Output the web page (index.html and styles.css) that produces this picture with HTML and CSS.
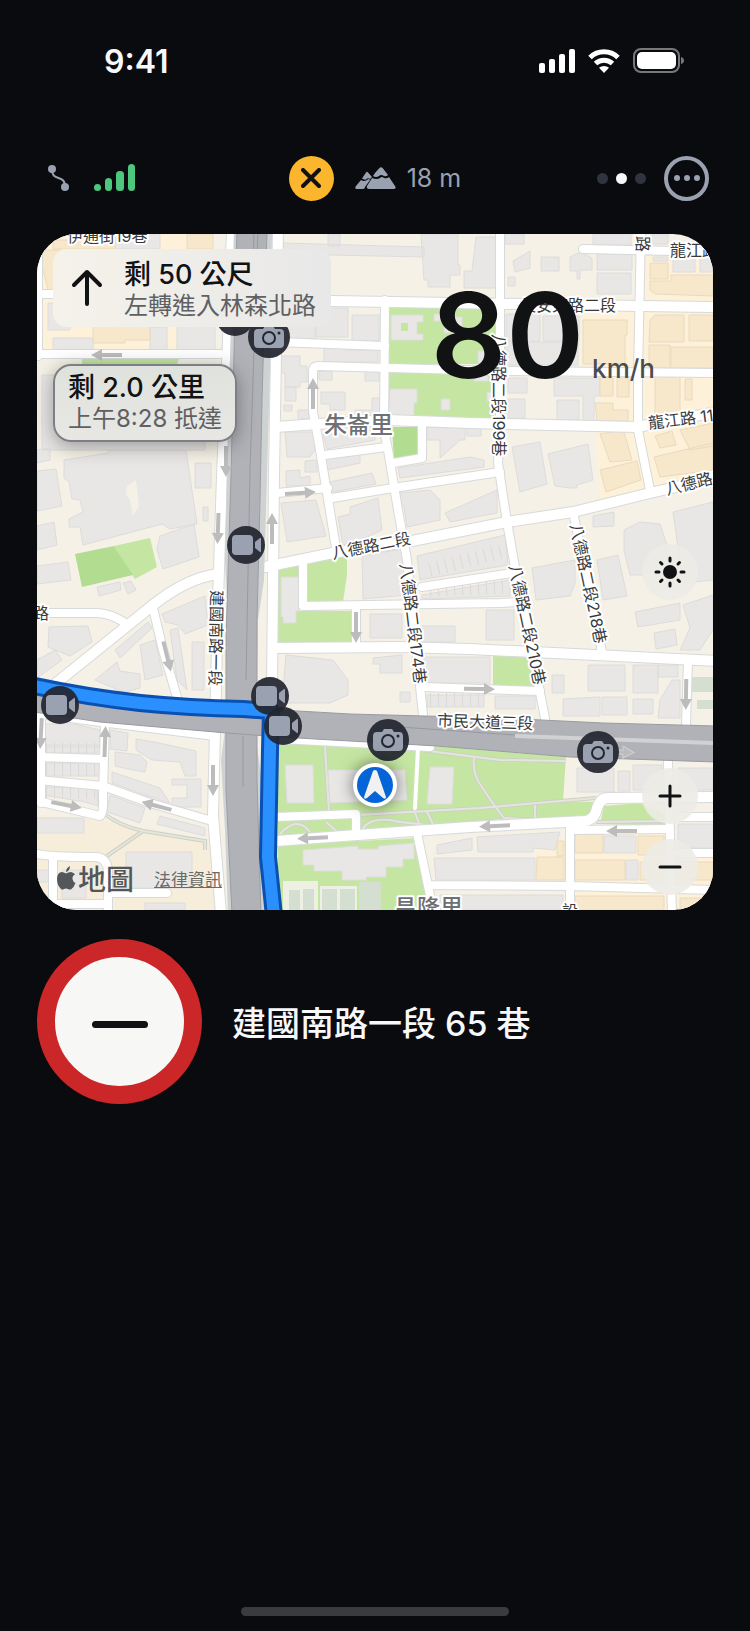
FILE: index.html
```html
<!DOCTYPE html>
<html lang="zh-Hant">
<head>
    <meta charset="UTF-8">
    <meta name="viewport" content="width=device-width, initial-scale=1.0">
    <title>導航</title>
    <link rel="stylesheet" href="styles.css">
</head>
<body>
    <div class="status-bar">
        <span class="clock">9:41</span>
        <div class="status-icons">
            <svg width="36" height="24" viewBox="0 0 36 24" fill="#fff">
                <rect x="0" y="14" width="6" height="10" rx="2"/>
                <rect x="10" y="10" width="6" height="14" rx="2"/>
                <rect x="20" y="5" width="6" height="19" rx="2"/>
                <rect x="30" y="0" width="6" height="24" rx="2"/>
            </svg>
            <svg width="32" height="24" viewBox="0 0 32 24" fill="none" stroke="#fff" stroke-width="5">
                <path d="M2 8.500a20 20 0 0 1 28 0"/>
                <path d="M7.500 14.500a12.500 12.500 0 0 1 17 0"/>
                <path d="M16 24l-5-5.200a7.500 7.500 0 0 1 10 0z" fill="#fff" stroke="none"/>
            </svg>
            <svg width="52" height="26" viewBox="0 0 52 26">
                <rect x="1" y="1" width="45" height="23" rx="7" fill="none" stroke="#77787a" stroke-width="2"/>
                <rect x="4" y="4" width="39" height="17" rx="5" fill="#fff"/>
                <path d="M48 9c4 1 4 6 0 7z" fill="#77787a"/>
            </svg>
        </div>
    </div>

    <div class="toolbar">
        <div class="tools-left">
            <svg width="24" height="28" viewBox="0 0 24 28">
                <path d="M5 5c0 14 13 4 13 18" fill="none" stroke="#9aa2b1" stroke-width="2"/>
                <circle cx="5" cy="5" r="4" fill="#9aa2b1"/>
                <circle cx="18" cy="23" r="4" fill="#9aa2b1"/>
            </svg>
            <svg width="42" height="28" viewBox="0 0 42 28" fill="#4dc67e">
                <rect x="0" y="20" width="7" height="7" rx="3.500"/>
                <rect x="11" y="14" width="7" height="13" rx="3.500"/>
                <rect x="22" y="7" width="8" height="20" rx="3.500"/>
                <rect x="34" y="0" width="7" height="27" rx="3.500"/>
            </svg>
        </div>
        <div class="tools-center">
            <button class="round-btn close-btn" aria-label="結束">
                <svg width="20" height="20" viewBox="0 0 20 20" stroke="#111214" stroke-width="4" stroke-linecap="round"><path d="M2 2l16 16M18 2L2 18"/></svg>
            </button>
            <div class="altitude">
                <svg width="41" height="22" viewBox="0 0 41 22" fill="#9aa2b1">
                    <path d="M8 6L11 1.500Q12 0 13 1.500L17 6L15 8Q13 6.500 11 8.500Q9 9 7 7.500Z" transform="translate(0 4)"/>
                    <path d="M6 13Q9 15 12 13Q14 11 15 13L10 20Q10 22 8 22H2Q-1 22 1 19Z"/>
                    <path d="M20 6L24 1.500Q26-1 28 1.500L33 8Q31 10 29 9Q26 7 24 9Q21 11 18 9Z"/>
                    <path d="M17 11Q22 13 25 11Q27 9 29 11Q32 12 34 10L40 19Q42 22 38 22H14Q11 22 12 19Z"/>
                </svg>
                <span>18 m</span>
            </div>
        </div>
        <div class="tools-right">
            <div class="page-dots"><i></i><i class="active"></i><i></i></div>
            <button class="round-btn more-btn" aria-label="更多"><i></i><i></i><i></i></button>
        </div>
    </div>

    <main>
        <div class="map-card">
            <svg class="map" viewBox="37 234 676 676" preserveAspectRatio="xMidYMid slice">
                <defs>
                    <g id="wide">
                        <path d="M232 230L228 340L222 475L218 600L215 730L213 815L221 914"/>
                        <path d="M278 230L274 475L272 690L271 745"/>
                        <path d="M265 567L333 553L407 542L507 522L573 512L650 493L716 478"/>
                        <path d="M277 648L400 647L470 649L716 661"/>
                        <path d="M37 698L60 680L127 626L153 605Q187 578 218 574"/>
                        <path d="M276 841L357 835L470 827L585 821Q593 820 596 812Q599 798 608 798L716 797"/>
                        <path d="M332 301L640 306L716 307"/>
                        <path d="M276 427L317 424L387 420L470 423L637 427L716 412"/>
                    </g>
                    <g id="narrow">
                        <path d="M385 300L384 430L388 450L398 510L407 560L423 715"/>
                        <path d="M716 373L500 371L318 366Q313 366 313 372V412L318 438L336 548"/>
                        <path d="M276 342L385 346"/>
                        <path d="M325 455L386 447M393 463L422 458V425"/>
                        <path d="M277 493L328 488M332 498L393 488L500 472"/>
                        <path d="M303 563V606L500 603L520 602"/>
                        <path d="M422 587L512 573"/>
                        <path d="M356 606V648"/>
                        <path d="M423 687L540 691"/>
                        <path d="M500 230V425L498 463L507 522L515 567L545 718"/>
                        <path d="M641 230L638 375V430L650 490"/>
                        <path d="M573 512L602 652"/>
                        <path d="M688 661L686 725"/>
                        <path d="M583 249L716 252"/>
                        <path d="M44 294H220M38 354H220M38 234V356"/>
                        <path d="M34 613H97Q110 613 127 624"/>
                        <path d="M153 608L163 650L177 697"/>
                        <path d="M38 757L104 759M38 780L103 786L150 803L212 821"/>
                        <path d="M38 801L100 816Q104 814 103 795L105 723"/>
                        <path d="M41 718V803"/>
                        <path d="M34 853Q45 857 97 857Q108 859 108 872V914M108 893H167M53 858V914M53 904H108"/>
                        <path d="M276 817L356 814V834"/>
                        <path d="M573 830L670 829M417 833L432 905M570 823V914M430 885L570 886L716 890"/>
                        <path d="M668 762L672 914M678 817H716M678 853H716"/>
                        <path d="M34 713L100 722L215 736"/>
                        <path d="M280 739L430 747"/>
                    </g>
                    <path id="route" d="M30 685Q80 696 140 703Q190 708 243 709L271 711L270 750L268 857L274 916" fill="none" stroke-linejoin="round"/>
                    <path id="arrow" d="M-2 15V-5H-6L0-16L6-5H2V15Z"/>
                    <g id="video">
                        <circle r="19" fill="#22262f" fill-opacity=".93"/>
                        <rect x="-14" y="-10" width="21" height="20" rx="4" fill="#9aa2b1"/>
                        <path d="M9-3L14-7Q15-8 15-5V5Q15 8 14 7L9 3Z" fill="#9aa2b1"/>
                    </g>
                    <g id="photo">
                        <circle r="21" fill="#22262f" fill-opacity=".93"/>
                        <path d="M-11-8H-6L-4-11H4L6-8H11Q15-8 15-4V7Q15 11 11 11H-11Q-15 11-15 7V-4Q-15-8-11-8Z" fill="#9aa2b1"/>
                        <circle cy="1" r="6" fill="none" stroke="#22262f" stroke-width="2"/>
                        <circle cx="10" cy="-4" r="1.500" fill="#22262f"/>
                    </g>
                </defs>

                <rect x="37" y="234" width="676" height="676" fill="#f5f1e6"/>

                <!-- land use -->
                <g fill="#fdf1d9">
                    <path d="M42 234H214V350H42Z"/>
                    <path d="M645 253H713V412L638 425V310H582V305H645ZM582 312H634V422H602V396H582Z"/>
                    <path d="M596 431H640L713 418V478L600 503Z"/>
                    <path d="M575 834H668V910H575ZM678 858H713V910H678ZM535 840H565V880H535Z"/>
                    <path d="M37 815L100 820L210 840L217 910H37Z" fill="#f6edda"/>
                </g>
                <g fill="#c5e6a2">
                    <path d="M389 308H495V364H389ZM388 373H494V419H388Z"/>
                    <path d="M114 546L150 538L157 567L135 579Z"/>
                    <path d="M277 568L298 563V611H351V644H277ZM307 562L347 555V575L343 602H307Z"/>
                    <path d="M493 655H531L536 687H493Z"/>
                    <path d="M278 738L437 746L566 757L563 801L595 802L590 820L278 841ZM278 845L417 838L432 896L425 910H278Z"/>
                    <path d="M604 806L640 803L668 815V826L600 824Z"/>
                    <path d="M82 359H179L176 366H82Z"/>
                </g>
                <path d="M75 554L114 546L133 575L82 587ZM392 427H418V459L394 461Z" fill="#b2dd90"/>

                <!-- park paths -->
                <g fill="none" stroke="#cdd1c6" stroke-width="4">
                    <path d="M325 747L329 812M357 815L480 808L596 798M421 750L500 760L565 761M474 757Q472 775 482 787Q490 800 504 818L540 820M535 805V818M280 834Q297 815 310 832M326 822L340 834M362 830Q370 815 400 822L436 826L500 820M427 812L434 826M414 810L420 826"/>
                    <path d="M103 813Q120 826 143 831L205 841V850M143 831L107 856M596 822L668 821"/>
                </g>
                <g fill="none" stroke="#e4e6dc" stroke-width="2">
                    <path d="M325 747L329 812M357 815L480 808L596 798M421 750L500 760L565 761M474 757Q472 775 482 787Q490 800 504 818L540 820M535 805V818M280 834Q297 815 310 832M326 822L340 834M362 830Q370 815 400 822L436 826L500 820M427 812L434 826M414 810L420 826"/>
                    <path d="M103 813Q120 826 143 831L205 841V850M143 831L107 856M596 822L668 821"/>
                </g>

                <!-- buildings -->
                <g class="building">
                    <path d="M283 243L424 247V257L283 254ZM328 234H340V246H328ZM421 234H458V265H460V275H450V287H428V280H424ZM476 237H497V288H464V271H472Z"/>
                    <path d="M316 308H348V337H316ZM352 315H379V341H352ZM283 325H315V339H283ZM324 347H345V350H378V362H324ZM281 356H300V366H307V382H300V387H285V373H281ZM285 387H296V401H285ZM284 405H292V411H284ZM319 371H332V380H319ZM321 392H345V410H330V404H321ZM365 371H379V381H365ZM372 398H380V415H355V410H372ZM285 432H313L317 447L310 457H287ZM323 434L375 430V440L327 449ZM298 410H309V419H298Z"/>
                    <path d="M391 315H423V322H417V334H423V340H391ZM390 389H417V403H414V416H388ZM441 399H450V410H441ZM434 314H442V321H434ZM444 317H462V333H444ZM478 351H492V363H478ZM474 372H488V381H474ZM487 392H493V401H487ZM427 427H465V440H460L440 458V440H427ZM467 428H481V436H467Z"/>
                    <path d="M505 234H524V244H505ZM513 261L530 251V268L515 272ZM541 257H559V271H541ZM570 257L580 252L592 258V270H580V279H577V271H570ZM508 277H515V286H508ZM593 234H631V245H593ZM597 254H632V270H597ZM597 273H631V294H597ZM652 234H668V244H652ZM673 257H695V272H673ZM700 257H713V272H700ZM653 257H668V261H653ZM506 314H540V341H506ZM543 316H579V341H543ZM506 342H578V365H506ZM508 378H527V393H508ZM554 378H600V396H594V421H583V396H554ZM508 399H525V418H508ZM557 400H579V420H557Z"/>
                    <path d="M512 447L540 442L547 484L520 492ZM548 454L588 444L593 480L577 485V488H570L555 486ZM593 516L614 512V526L593 527ZM624 530L640 522L660 524L668 548V560L645 575L630 575L624 550ZM673 512L713 502V580L683 583ZM532 568L575 560V583L570 596L536 600ZM597 560L618 555L627 596L603 600ZM635 612L680 603V620L638 627ZM683 605L713 595V630L700 650H680L690 628ZM654 633L675 629L677 645L656 649ZM588 665H625V691H588ZM633 665H658V693H633ZM658 665H678V677H658Z"/>
                    <path d="M281 503L316 500L326 536L287 542ZM286 471L300 470V478L310 476V486H286ZM305 461L317 460V472H305ZM326 459L360 454V463L327 470ZM330 482L372 473L376 484L333 492ZM338 517L350 514V507L378 498L382 530L360 540L343 545ZM398 468L470 457L484 460V467L400 478ZM400 493L430 490L440 500V520L407 527L404 506H400ZM445 513L497 490V513L450 522ZM362 556L402 549L407 595L363 599ZM417 556L505 535L508 565L420 580ZM422 595L510 580V596L422 599ZM281 577H299V611H296V623H283V617H281ZM370 614H402V638H370ZM420 626H455V642H420ZM486 610H514V640H486Z"/>
                    <path d="M286 655L333 660L348 680V695L330 703H282ZM373 658L402 655V673H380V664H373ZM424 657H490V683H424ZM427 695H484V707H427ZM400 692H410V702H400ZM563 699L600 697V716H563ZM602 697H627V715H602ZM633 699H653V714H633ZM660 700L672 680H680V718H658ZM495 696H535V709H495ZM552 675H564V693H552Z"/>
                    <path d="M577 768H614V792H577ZM618 771H630V791H618ZM633 765H662V790H633ZM678 768H713V790H678ZM285 765H313L314 803H287ZM328 770H405L407 800L330 803ZM430 767H454L452 804H427ZM303 850L358 846V849H378V846L414 843V859H403V867H386V877H366V880H342V871H314V865H303Z"/>
                    <path d="M437 845L472 838V850L437 854ZM477 837L560 832L555 850L533 848V852H478ZM434 858H535V880H436ZM440 895H563V910H440ZM604 836H636V853H604ZM626 860H638V880H626ZM678 824H713V848H678Z"/>
                    <path d="M37 450L50 448V460L37 463ZM37 471L56 469L62 506L37 511ZM64 460L108 453V450H186L197 524L170 529L162 524L83 545L80 527H69V519L83 512L80 500L72 499L69 482L64 478ZM160 536L194 524L199 557L163 569L157 550ZM37 526L54 522L57 545L37 550ZM37 566L68 562L71 580L37 584ZM97 587L120 582L121 590L99 596ZM123 583L131 581L136 590L128 594ZM195 463H211V488H195ZM203 507H208V521H203ZM42 375H205V450H42Z"/>
                    <path d="M49 627L88 626L92 642L70 656L48 647ZM37 660L55 650L62 660L37 678ZM162 614L205 596L208 625L185 634L178 625L165 622ZM192 642H204V690H192ZM140 645L155 640L163 675L145 680ZM115 650L148 622L152 628L120 658ZM170 630L178 628L187 690L177 680ZM95 680L117 662L120 671L140 674V688L125 692L118 690Z"/>
                    <path d="M45 724H74L100 730V747H45ZM110 730L128 733L127 751L110 749ZM136 739L154 742L196 751V776H185L180 762L152 760L136 750ZM43 745H98V753H43ZM43 763H100V776H43ZM43 787H97L98 806L85 802L43 795ZM115 752L140 755L147 762L145 772L133 770L115 766ZM112 772L160 788L170 803L148 796L112 783ZM110 795L145 808L140 823L107 812ZM172 779H201V807H172V798H187V785H172ZM160 816L205 828V836L157 824ZM37 818H84V833H37ZM126 852H192V888H126ZM37 870H50V882H37ZM62 870H86V898H62ZM145 903H185V910H145Z"/>
                    <path d="M53 338H93V350H53ZM150 327H167V351H150ZM177 326H215V350H177ZM48 303H70V330H48ZM115 234H160V249H115Z"/>
                </g>
                <g class="shop">
                    <path d="M93 326H150V340H125V343H93ZM53 240H115V249H53ZM187 234H213V249H187ZM38 250H60V290H48Z"/>
                    <path d="M650 263H668V279H650ZM671 275H713V296L655 294L650 290V281H671ZM650 320L655 315H684V342H649ZM689 315H713V341H689ZM649 345H670V368H649ZM671 347H713V368H671ZM583 320H627V335H625V364H583ZM600 378H613V396H600ZM617 378H629V397H617ZM595 403H613V410H628V421H597ZM655 376H680V414H655ZM685 379H692V400H685Z"/>
                    <path d="M600 434L623 430L627 442L632 460L610 462ZM655 436L672 431L676 445L660 448ZM680 430L713 423V446L690 450ZM654 457L713 443V470L660 477ZM600 470L637 461L641 480L606 492Z"/>
                    <path d="M575 834H603V853H575ZM575 860H625V880H575ZM638 836H664V855H638ZM640 862H664V880H640ZM575 896H664V910H575ZM537 857H564V880H536ZM557 841H564V856H557ZM680 862H713V880H680ZM680 898H713V910H680Z"/>
                </g>
                <path d="M401 323H408V331H401Z" fill="#c5e6a2"/>
                <path d="M127 486L136 480L139 506L133 516L130 500L126 495Z" fill="#f5f1e6"/>
                <g fill="#d4dfd2">
                    <path d="M692 677H713V692H692ZM697 700H713V709H697Z"/>
                    <path d="M283 881H318V910H283ZM320 886H357V910H320Z" fill="#edf0e3"/>
                    <path d="M289 890H300V910H289ZM303 889H314V910H303ZM322 889H337V910H322ZM340 889H355V910H340ZM359 882H381V910H359Z"/>
                </g>
                <g stroke="#dad9d7" stroke-dasharray="1 7">
                    <path d="M46 749H98M46 769H100M46 792H98" stroke-width="13"/>
                    <path d="M430 570L508 550M430 590L508 586M430 700H484" stroke-width="14"/>
                </g>

                <!-- streets -->
                <g fill="none" stroke="#d7dada" stroke-linejoin="round" stroke-linecap="round">
                    <use href="#narrow" stroke-width="10"/>
                    <use href="#wide" stroke-width="12"/>
                </g>
                <g fill="none" stroke="#fff" stroke-linejoin="round" stroke-linecap="round">
                    <use href="#narrow" stroke-width="8"/>
                    <use href="#wide" stroke-width="10"/>
                    <path d="M418 748L415 808" stroke-width="4"/>
                </g>

                <!-- expressways -->
                <path d="M234 230L228 420L225 560L229 640V700L221 760L225 830L228 914H266L262 780L256 740L258 620L264 580L270 370L272 230Z" fill="#ced2d2"/>
                <path d="M237 230H267L262 400L260 500L257 620V780L261 914H232L226 790V640L231 475Z" fill="#b1b2b8" stroke="#9c9da3"/>
                <path d="M34 690L140 705L280 710L350 714L500 718L603 723L716 726V762L570 757L437 746L280 737L227 733L100 722L34 712Z" fill="#b1b2b8" stroke="#9a9ba1"/>
                <path d="M258 230L250 470L246 680M243 736V787M254 230L252 350" fill="none" stroke="#98999f"/>
                <path d="M515 736L716 743" stroke="#cfd1d3" stroke-width="4"/>
                <path d="M400 727L515 735" stroke="#98999f"/>

                <g fill="#bcbcbc">
                    <use href="#arrow" transform="translate(313 394)"/>
                    <use href="#arrow" transform="translate(300 493) rotate(86)"/>
                    <use href="#arrow" transform="translate(272 529)"/>
                    <use href="#arrow" transform="translate(107 355) rotate(-90)"/>
                    <use href="#arrow" transform="translate(226 461) rotate(180)"/>
                    <use href="#arrow" transform="translate(218 528) rotate(182)"/>
                    <use href="#arrow" transform="translate(167 656) rotate(166)"/>
                    <use href="#arrow" transform="translate(356 627) rotate(180)"/>
                    <use href="#arrow" transform="translate(479 689) rotate(91)"/>
                    <use href="#arrow" transform="translate(686 694) rotate(181)"/>
                    <use href="#arrow" transform="translate(41 733) rotate(183)"/>
                    <use href="#arrow" transform="translate(105 742) rotate(2)"/>
                    <use href="#arrow" transform="translate(66 805) rotate(101)"/>
                    <use href="#arrow" transform="translate(157 806) rotate(-75)"/>
                    <use href="#arrow" transform="translate(213 780) rotate(180)"/>
                    <use href="#arrow" transform="translate(313 838) rotate(-93)"/>
                    <use href="#arrow" transform="translate(495 826) rotate(-93)"/>
                    <use href="#arrow" transform="translate(622 831) rotate(-90)"/>
                    <use href="#arrow" transform="translate(618 752) rotate(92)" stroke="#ced0d2"/>
                </g>

                <use href="#route" stroke="#0a50b0" stroke-width="18"/>
                <use href="#route" stroke="#2b90ff" stroke-width="12"/>

                <g class="street-name">
                    <text x="67" y="242">伊通街19巷</text>
                    <text x="520" y="311">長安東路二段</text>
                    <text x="670" y="256">龍江路</text>
                    <text x="33" y="619">路</text>
                    <text transform="translate(637 236) rotate(90)">路</text>
                    <text transform="translate(649 429) rotate(-7)">龍江路 11</text>
                    <text transform="translate(667 495) rotate(-14)">八德路二段</text>
                    <text transform="translate(333 559) rotate(-11)">八德路二段</text>
                    <text transform="translate(437 726) rotate(2)">市民大道三段</text>
                    <text transform="translate(211 590) rotate(91)">建國南路一段</text>
                    <text transform="translate(493 334) rotate(90)">八德路二段199巷</text>
                    <text transform="translate(400 564) rotate(83)">八德路二段174巷</text>
                    <text transform="translate(509 566) rotate(78)">八德路二段210巷</text>
                    <text transform="translate(570 525) rotate(78)">八德路二段218巷</text>
                    <text x="562" y="917">設</text>
                </g>
                <g class="area-name">
                    <text x="324" y="433">朱崙里</text>
                    <text x="394" y="916">昌隆里</text>
                </g>

                <use href="#video" x="235" y="317"/>
                <use href="#photo" x="269" y="337"/>
                <use href="#video" x="246" y="545"/>
                <use href="#video" x="60" y="705"/>
                <use href="#video" x="270" y="696"/>
                <use href="#video" x="283" y="726"/>
                <use href="#photo" x="388" y="740"/>
                <use href="#photo" x="598" y="752"/>
                <g class="me">
                    <circle cx="375" cy="785" r="22" fill="#fff"/>
                    <circle cx="375" cy="785" r="18" fill="#0564d6"/>
                    <path d="M373 771Q375 769 377 771L386 797Q386 800 383 798L375 791L367 798Q364 800 364 797Z" fill="#f1f1f1"/>
                </g>
            </svg>

            <div class="guidance">
                <svg width="32" height="38" viewBox="0 0 32 38" fill="none" stroke="#111214" stroke-width="4" stroke-linecap="round" stroke-linejoin="round"><path d="M16 35V3M3 16L16 3L29 16"/></svg>
                <div>
                    <p class="distance">剩 50 公尺</p>
                    <p class="detail">左轉進入林森北路</p>
                </div>
            </div>
            <div class="arrival">
                <p class="distance">剩 2.0 公里</p>
                <p class="detail">上午8:28 抵達</p>
            </div>

            <div class="speed"><strong>80</strong><span>km/h</span></div>

            <button class="map-btn sun-btn" aria-label="亮度">
                <svg width="32" height="32" viewBox="-16 -16 32 32" stroke="#111214" stroke-width="3" stroke-linecap="round">
                    <circle r="7" fill="#111214" stroke="none"/>
                    <path d="M0-11V-14M0 11V14M-11 0H-14M11 0H14M8-8L9.500-9.500M-8-8L-9.500-9.500M8 8L9.500 9.500M-8 8L-9.500 9.500"/>
                </svg>
            </button>
            <div class="zoom-btns">
                <button class="map-btn" aria-label="放大">
                    <svg width="24" height="24" viewBox="0 0 24 24" stroke="#111214" stroke-width="3" stroke-linecap="round"><path d="M2 12H22M12 2V22"/></svg>
                </button>
                <button class="map-btn" aria-label="縮小">
                    <svg width="24" height="24" viewBox="0 0 24 24" stroke="#111214" stroke-width="3" stroke-linecap="round"><path d="M2 12H22"/></svg>
                </button>
            </div>

            <div class="attribution">
                <span class="brand">
                    <svg width="19" height="24" viewBox="0 0 19 24" fill="#55565a">
                        <path d="M13 0Q13 5 9 6Q9 2 13 0ZM9 7.500Q11 6 14 6Q17 6.500 18 8.500Q15 10 15.500 13Q16 16 18.500 17Q17 21 14.500 23Q13 24 11 23Q9 22 7 23Q5 24 4 23Q0 19 0 13Q0 7 4.500 6Q7 6 9 7.500Z"/>
                    </svg>
                    地圖
                </span>
                <a href="#">法律資訊</a>
            </div>
        </div>

        <div class="road-info">
            <div class="limit-sign"><i></i></div>
            <p>建國南路一段 65 巷</p>
        </div>
    </main>

    <div class="home-bar"></div>
</body>
</html>
```

FILE: styles.css
```css
* {
    box-sizing: border-box;
}
body {
    margin: 0;
    min-height: 100vh;
    display: flex;
    flex-direction: column;
    background: #090b0f;
    color: #f7f8fa;
    font-family: Inter, "Noto Sans CJK TC", sans-serif;
}
p {
    margin: 0;
}
button {
    padding: 0;
    border: none;
    cursor: pointer;
}
svg {
    display: block;
}

/* top rows */
.status-bar {
    display: flex;
    justify-content: space-between;
    align-items: center;
    height: 60px;
    margin-top: 31px;
    padding: 0 65px 0 104px;
}
.clock {
    font-size: 32px;
    font-weight: 600;
}
.status-icons {
    display: flex;
    align-items: center;
    gap: 13px;
}
.toolbar {
    display: grid;
    grid-template-columns: 1fr auto 1fr;
    align-items: center;
    height: 46px;
    margin: 64px 41px 33px;
}
.tools-left,
.tools-center,
.tools-right {
    display: flex;
    align-items: center;
}
.tools-left {
    gap: 23px;
    padding-left: 6px;
}
.tools-center {
    gap: 21px;
}
.tools-right {
    justify-content: flex-end;
    gap: 18px;
}
.round-btn {
    display: flex;
    align-items: center;
    justify-content: center;
    width: 45px;
    height: 45px;
    border-radius: 50%;
}
.close-btn {
    background: #fbb62e;
}
.more-btn {
    gap: 4px;
    background: none;
    border: 4px solid #9aa2b1;
}
.more-btn i {
    width: 6px;
    height: 6px;
    border-radius: 50%;
    background: #9aa2b1;
}
.altitude {
    display: flex;
    align-items: center;
    gap: 11px;
    color: #9aa2b1;
    font-size: 25px;
}
.page-dots {
    display: flex;
    gap: 8px;
}
.page-dots i {
    width: 11px;
    height: 11px;
    border-radius: 50%;
    background: #30343e;
}
.page-dots .active {
    background: #f7f8fa;
}

/* map */
main {
    padding: 0 37px;
}
.map-card {
    position: relative;
    aspect-ratio: 1;
    border-radius: 40px;
    overflow: hidden;
    color: #111214;
}
.map {
    width: 100%;
    height: 100%;
}
.building {
    fill: #e8e7e6;
    stroke: #dddcda;
    stroke-width: 1;
}
.shop {
    fill: #f7e7cb;
    stroke: #e9dabe;
    stroke-width: 1;
}
.street-name {
    font-size: 16px;
    fill: #3a3a3c;
    stroke: #fff;
    stroke-width: 4px;
    stroke-linejoin: round;
    paint-order: stroke;
}
.area-name {
    font-size: 23px;
    font-weight: 500;
    fill: #6d7175;
    stroke: #fff;
    stroke-width: 4px;
    stroke-linejoin: round;
    paint-order: stroke;
}
.me {
    filter: drop-shadow(0 0 8px rgba(0, 0, 0, 0.5));
}
.guidance,
.arrival {
    position: absolute;
    left: 16px;
    height: 78px;
}
.guidance {
    top: 15px;
    display: flex;
    align-items: center;
    gap: 21px;
    padding: 0 15px 0 18px;
    border-radius: 14px;
    background: linear-gradient(90deg, #f5f2ea, #e8e8e8);
}
.arrival {
    top: 130px;
    padding: 4px 13px;
    border: 2px solid #7c7f83;
    border-radius: 18px;
    background: linear-gradient(#dfe2dc, #e8e7e4);
    box-shadow: 0 4px 20px rgba(0, 0, 0, 0.35);
}
.distance {
    font-size: 27px;
    font-weight: 500;
    line-height: 36px;
}
.detail {
    color: #5f6062;
    font-size: 24px;
    line-height: 26px;
}
.speed {
    position: absolute;
    top: 42px;
    right: 58px;
    display: flex;
    align-items: baseline;
    gap: 8px;
}
.speed strong {
    font-size: 118px;
    font-weight: 600;
    line-height: 118px;
}
.speed span {
    color: #4b4c4e;
    font-size: 26px;
    font-weight: 500;
}
.map-btn {
    display: flex;
    align-items: center;
    justify-content: center;
    width: 56px;
    height: 56px;
    border-radius: 50%;
    background: rgba(236, 235, 229, 0.9);
}
.sun-btn {
    position: absolute;
    top: 310px;
    right: 15px;
}
.zoom-btns {
    position: absolute;
    right: 15px;
    bottom: 15px;
    display: flex;
    flex-direction: column;
    gap: 15px;
}
.attribution {
    position: absolute;
    left: 20px;
    bottom: 12px;
    display: flex;
    align-items: center;
    gap: 20px;
}
.brand {
    display: flex;
    align-items: center;
    gap: 2px;
    color: #55565a;
    font-size: 28px;
    font-weight: 500;
}
.attribution a {
    color: #6b6a66;
    font-size: 17px;
}

/* current road */
.road-info {
    display: flex;
    align-items: center;
    gap: 30px;
    margin-top: 29px;
    font-size: 34px;
    font-weight: 500;
}
.limit-sign {
    display: flex;
    align-items: center;
    justify-content: center;
    width: 165px;
    height: 165px;
    border: 18px solid #cb2628;
    border-radius: 50%;
    background: #f7f7f5;
}
.limit-sign i {
    width: 56px;
    height: 7px;
    margin-top: 6px;
    border-radius: 4px;
    background: #111214;
}
.home-bar {
    width: 268px;
    height: 9px;
    margin: auto auto 15px;
    border-radius: 5px;
    background: #3a3b3d;
}
```
